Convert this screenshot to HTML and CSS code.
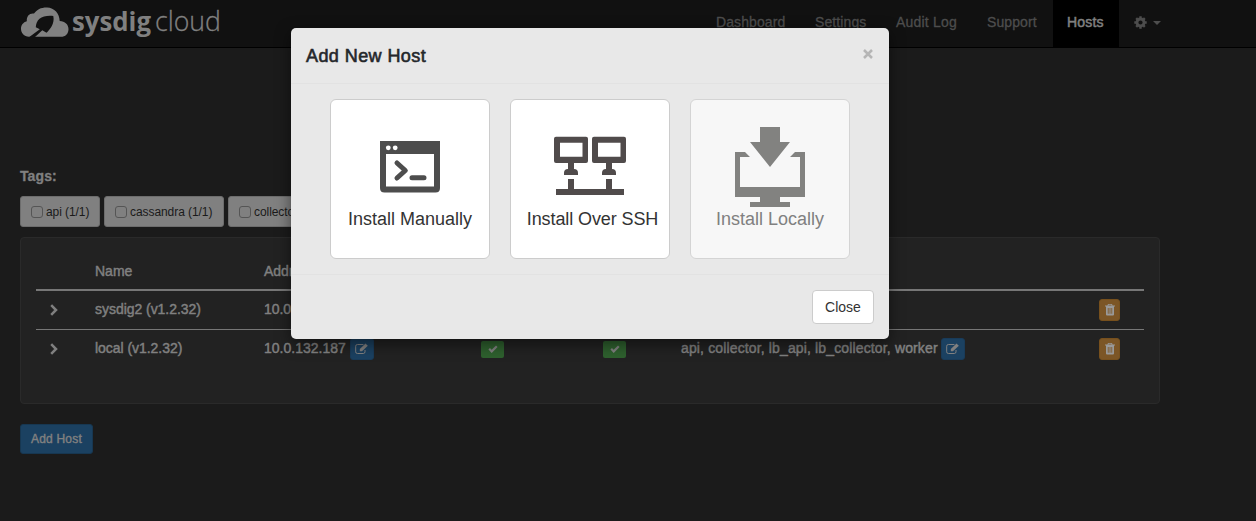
FILE: index.html
```
<!DOCTYPE html>
<html lang="en">
<head>
<meta charset="utf-8">
<title>Hosts</title>
<link rel="stylesheet" href="styles.css">
</head>
<body>
<svg class="defs" width="0" height="0" aria-hidden="true">
  <symbol id="edit" viewBox="0 0 14 12"><path d="M10 7v1.800a1.700 1.700 0 0 1-1.700 1.700H2.400A1.700 1.700 0 0 1 .7 8.800V3.200a1.700 1.700 0 0 1 1.700-1.700h6" fill="none" stroke="currentColor" stroke-width="1"/><path fill="currentColor" d="M4.800 8.300V6L10.500.6l2.300 2.200L7 8.300z"/></symbol>
  <symbol id="trash" viewBox="0 0 10 12"><path fill="currentColor" fill-rule="evenodd" d="M3 0h4l.6 1.500H10v1H9V10.500q0 1-1 1H2q-1 0-1-1V2.500H0v-1h2.400zM3.600.8 3.400 1.500h3.200L6.400.8zM2.800 4v5.800h.8V4zm1.800 0v5.800h.8V4zm1.800 0v5.800h.8V4z"/></symbol>
  <symbol id="check" viewBox="0 0 10 8"><path d="m1.200 3.800 2.500 2.600L8.800 1.300" fill="none" stroke="currentColor" stroke-width="2.200"/></symbol>
  <symbol id="chevron" viewBox="0 0 8 12"><path d="m1.200 1.200 4.800 4.800-4.800 4.800" fill="none" stroke="currentColor" stroke-width="2.500"/></symbol>
</svg>
<nav class="navbar">
  <svg class="logo" width="204" height="40" viewBox="0 0 204 40">
    <path fill="#808080" d="M9 36.800C4 36.800 1 32.800 1 28.800c0-3.500 2.200-6.500 5.800-7.500C6.500 16 9.500 13 14 13.600 17 9.500 21 7.400 27 7.500c7.500.2 12.500 6 12.700 13.500 5.300.3 8.800 3.500 8.800 8.200 0 4.500-3.200 7.600-7.500 7.600z"/>
    <path fill="#111" d="M33.300 16C28 15.300 22.500 16.300 19.500 18.700c-2.500 2-3.700 5.500-3.700 8.600l4 2L9.300 37H15l7.300-6.800 4.200 2.600C30 29.500 35 23.500 33.300 16z"/>
    <text class="logo-bold" x="52" y="30.500" textLength="79" lengthAdjust="spacingAndGlyphs">sysdig</text>
    <text class="logo-light" x="135" y="30.500" textLength="66" lengthAdjust="spacingAndGlyphs">cloud</text>
  </svg>
  <div class="links">
    <a class="w-dash">Dashboard</a><a class="w-set">Settings</a><a class="w-audit">Audit Log</a><a class="w-sup">Support</a><a class="active">Hosts</a>
    <a class="gear"><svg width="13" height="13" viewBox="-6.500 -6.500 13 13"><circle r="3.500" fill="none" stroke="currentColor" stroke-width="2.800"/><path d="M0-6.200V-4M0 4v2.200M-6.200 0H-4M4 0h2.200M-4.300-4.300-3-3M3 3l1.300 1.300M-4.300 4.300-3 3M3-3l1.300-1.300" stroke="currentColor" stroke-width="2.400"/></svg><i class="caret"></i></a>
  </div>
</nav>
<main>
  <div class="tags-title">Tags:</div>
  <div class="tags"><label class="t-api"><i></i>api (1/1)</label><label class="t-cas"><i></i>cassandra (1/1)</label><label class="t-col"><i></i>collector (1/1)</label></div>
  <section class="panel">
    <div class="row head"><span></span><span>Name</span><span>Address</span><span></span><span></span><span></span><span></span></div>
    <div class="row first"><span class="chev"><svg width="8" height="12"><use href="#chevron"/></svg></span><span class="name">sysdig2 (v1.2.32)</span><span class="name">10.0.132.186</span><span></span><span></span><span></span><span><b class="btn-trash"><svg width="10" height="12"><use href="#trash"/></svg></b></span></div>
    <div class="row second"><span class="chev"><svg width="8" height="12"><use href="#chevron"/></svg></span><span class="name">local (v1.2.32)</span><span class="ip"><em>10.0.132.187</em><b class="btn-edit"><svg width="14" height="12"><use href="#edit"/></svg></b></span><span><b class="ok"><svg width="10" height="8"><use href="#check"/></svg></b></span><span><b class="ok"><svg width="10" height="8"><use href="#check"/></svg></b></span><span class="roles"><em>api, collector, lb_api, lb_collector, worker</em><b class="btn-edit"><svg width="14" height="12"><use href="#edit"/></svg></b></span><span><b class="btn-trash"><svg width="10" height="12"><use href="#trash"/></svg></b></span></div>
  </section>
  <button class="add">Add Host</button>
</main>
<div class="modal">
  <header><h4>Add New Host</h4><svg class="x" width="10" height="10" viewBox="0 0 10 10"><path d="m1 1 8 8M9 1 1 9" stroke="#b5b5b5" stroke-width="2.500"/></svg></header>
  <div class="cards">
    <div class="card">
      <svg width="80" height="80" viewBox="0 0 80 80"><path fill="#4d4d4d" fill-rule="evenodd" d="M10 14h60v47q0 4.500-4.500 4.500h-51Q10 65.500 10 61zm6 13v32.500h48V27z"/><circle cx="18.300" cy="20.800" r="2.400" fill="#fff"/><circle cx="25.200" cy="20.800" r="2.400" fill="#fff"/><path d="m27 36 8.300 7.500L27 51M42 50.800h12" fill="none" stroke="#4d4d4d" stroke-width="5" stroke-linecap="round" stroke-linejoin="round"/></svg>
      <p>Install Manually</p>
    </div>
    <div class="card ssh">
      <svg width="80" height="80" viewBox="0 0 80 80"><g fill="#504b4b"><path id="host" fill-rule="evenodd" d="M6 9.700h30q2 0 2 2V34q0 2-2 2H24v6q4 0 4 4v2H14v-2q0-4 4-4v-6H6q-2 0-2-2V11.700q0-2 2-2zm4 6v14h22.500v-14zM18 52h6v10h-6z"/><use href="#host" x="38"/><path d="M6 62h68v6H6z"/></g></svg>
      <p>Install Over SSH</p>
    </div>
    <div class="card disabled">
      <svg width="80" height="80" viewBox="0 0 80 80"><path fill="#828280" d="M30 0h20v15h10L40 40 20 15h10zM5 25h10l5 5H10v30h60V30H60l5-5h10v45H50v5h10v5H20v-5h10v-5H5z"/></svg>
      <p>Install Locally</p>
    </div>
  </div>
  <footer><button class="close">Close</button></footer>
</div>
</body>
</html>
```
FILE: styles.css
```
* { box-sizing: border-box; }
body { margin: 0; height: 521px; overflow: hidden; background: #1b1b1b; color: #808080; font: 14px/20px "Liberation Sans", Arial, sans-serif; }
.defs { position: absolute; }
.navbar { display: flex; justify-content: space-between; height: 48px; background: #111; border-bottom: 1px solid #000; padding: 0 81px 0 20px; }
.logo { display: block; }
.logo-bold { font: 700 27px "Open Sans", sans-serif; fill: #808080; }
.logo-light { font: 300 28px "Open Sans", sans-serif; fill: #808080; stroke: #808080; stroke-width: .3px; }
.links { display: flex; color: #4d4d4d; -webkit-text-stroke: .3px; }
.links a { padding: 12px 0 15px 15px; white-space: nowrap; }
.w-dash { width: 99px; letter-spacing: .1px; }
.w-set { width: 81px; letter-spacing: .1px; }
.w-audit { width: 91px; letter-spacing: .2px; }
.w-sup { width: 81px; letter-spacing: .1px; }
.links .active { width: 66px; padding-left: 14px; background: #000; color: #808080; letter-spacing: .2px; -webkit-text-stroke: .5px; }
.links .gear { width: 56px; display: flex; align-items: center; gap: 6px; padding: 0 0 2px 14px; }
.links .gear svg { margin-left: 1px; }
.caret { border: 4px solid transparent; border-top-color: currentColor; border-bottom: 0; }
main { padding: 118px 0 0 20px; }
.tags-title { font-weight: 700; letter-spacing: .1px; margin-bottom: 10px; -webkit-text-stroke: .3px; }
.tags { display: flex; gap: 4px; margin-bottom: 10px; }
.tags label { display: flex; align-items: center; height: 31px; border-radius: 3px; background: #808080; border: 1px solid #6d6d6d; color: #1a1a1a; font-size: 12px; letter-spacing: -.07px; padding-left: 10px; gap: 3px; white-space: nowrap; }
.tags i { width: 12px; height: 12px; border: 1px solid #555; border-radius: 3px; }
.t-api { width: 80px; }
.t-cas { width: 120px; }
.t-col { width: 118px; }
.panel { width: 1140px; height: 167px; background: #222; border: 1px solid #2a2a2a; border-radius: 4px; padding: 15px; -webkit-text-stroke: .45px; }
.row { display: grid; grid-template-columns: 59px 169px 217px 122px 78px 418px 45px; align-items: center; white-space: nowrap; }
.head { height: 38px; border-bottom: 2px solid #777; }
.first { height: 38px; }
.second { height: 39px; border-top: 1px solid #777; }
.name { padding-bottom: 2px; letter-spacing: -.04px; }
.row em { font-style: normal; }
.row b { display: flex; align-items: center; justify-content: center; height: 22px; border-radius: 3px; }
.chev { padding: 0 0 1px 14px; display: flex; }
.ip, .roles { display: flex; gap: 3px; }
.ip em { width: 83px; }
.roles em { width: 257px; letter-spacing: .14px; }
.row .btn-edit { width: 24px; background: #1b4161; border: 1px solid #193b59; }
.row .btn-trash { width: 21px; background: #7c5626; border: 1px solid #77501d; color: #999; }
.row .ok { width: 23px; height: 17px; background: #2e602e; border-radius: 2px; }
button { font-family: inherit; display: block; }
.add { width: 73px; height: 30px; margin-top: 20px; padding: 0; background: #1b4161; border: 1px solid #173751; border-radius: 3px; color: #808080; font-size: 12px; letter-spacing: .2px; -webkit-text-stroke: .4px; }
.modal { position: absolute; left: 291px; top: 28px; width: 598px; height: 311px; background: #e8e8e8; border-radius: 5px; box-shadow: 0 5px 15px rgba(0,0,0,.5); color: #333; }
header { height: 56px; border-bottom: 1px solid #e2e2e2; padding: 0 16px 0 15px; display: flex; justify-content: space-between; align-items: center; }
h4 { margin: 0; font-size: 18px; font-weight: 400; letter-spacing: .42px; color: #24272b; -webkit-text-stroke: .6px; }
.x { margin-bottom: 4px; }
.cards { display: flex; gap: 20px; padding: 15px 39px; height: 190px; }
.card { width: 160px; height: 160px; padding-top: 27px; background: #fff; border: 1px solid #ccc; border-radius: 6px; text-align: center; }
.card svg { display: block; margin: 0 auto; }
.card p { margin: 2px 0 0; font-size: 18px; white-space: nowrap; }
.ssh p { padding-left: 5px; letter-spacing: -.1px; }
.disabled { background: #f7f7f7; border-color: #d4d4d4; color: #808080; }
footer { border-top: 1px solid #e2e2e2; display: flex; justify-content: flex-end; padding: 15px; }
.close { width: 62px; height: 34px; padding: 0; background: #fff; border: 1px solid #ccc; border-radius: 4px; color: #333; font-size: 14px; }
```
